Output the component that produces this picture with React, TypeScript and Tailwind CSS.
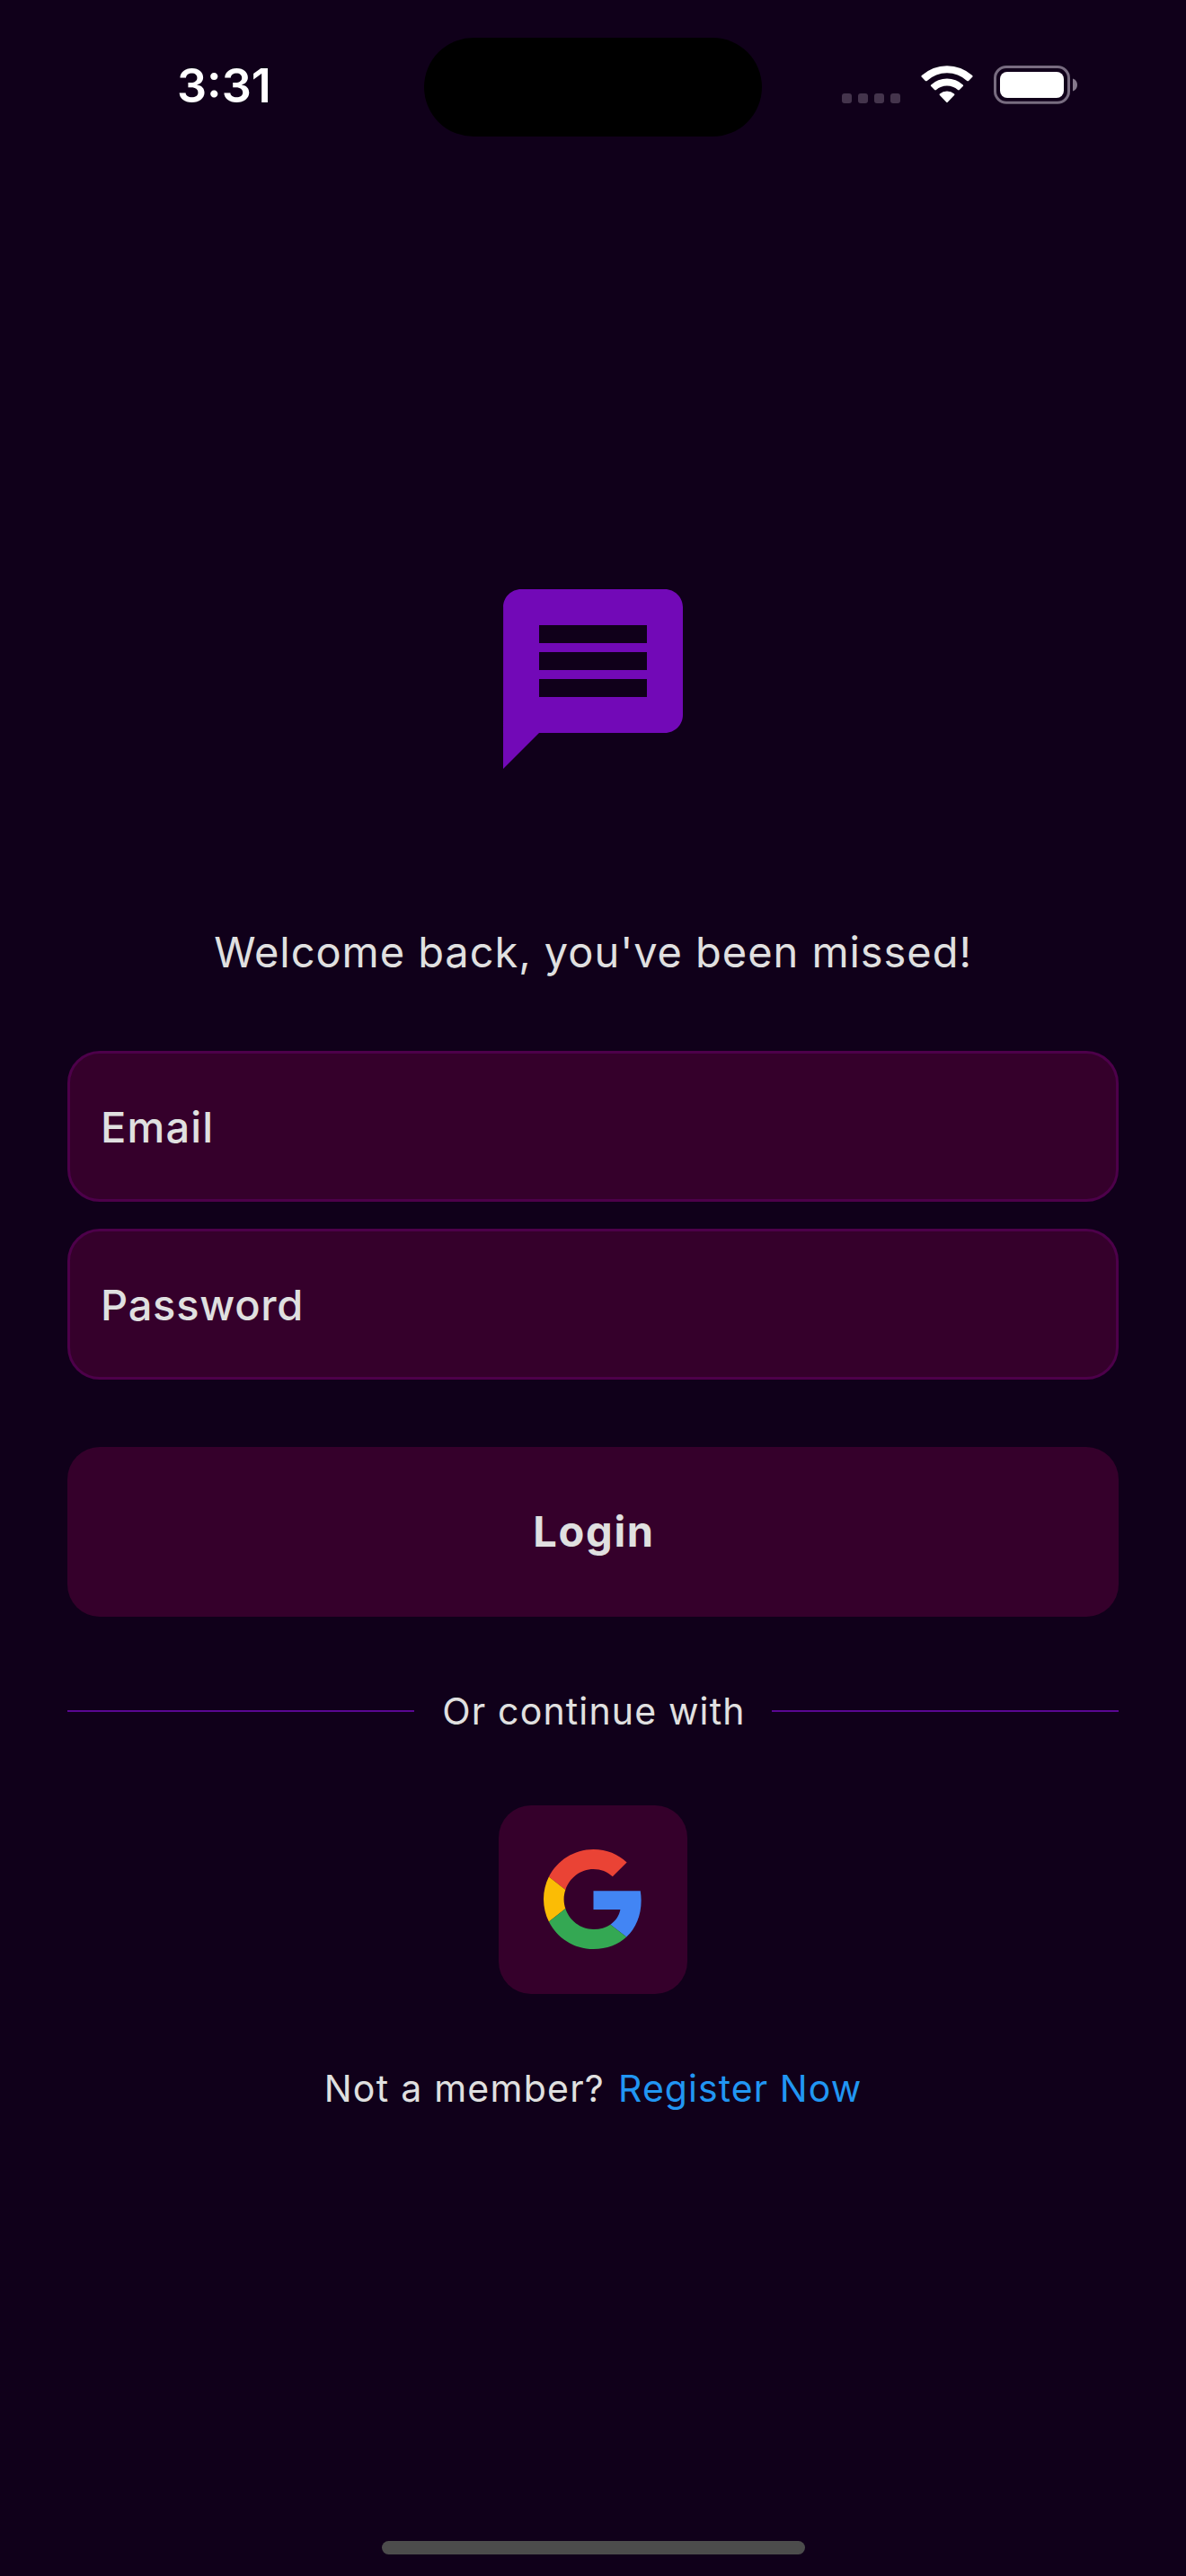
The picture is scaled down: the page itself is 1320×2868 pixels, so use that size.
import React from "react";

function StatusBar() {
  return (
    <header className="flex h-[152px] items-start pt-[42px]">
      <div className="w-[472px] pt-[24px] pl-[197px] text-[52px] leading-[60px] font-semibold text-white">
        3:31
      </div>
      <div className="h-[110px] w-[376px] rounded-[55px] bg-black" />
      <div className="flex pt-[31px] pl-[89px]">
        <div className="mt-[31px] flex gap-[7px]">
          <span className="size-[11px] rounded-[3px] bg-[#44344c]" />
          <span className="size-[11px] rounded-[3px] bg-[#44344c]" />
          <span className="size-[11px] rounded-[3px] bg-[#44344c]" />
          <span className="size-[11px] rounded-[3px] bg-[#44344c]" />
        </div>
        <WifiIcon />
        <BatteryIcon />
      </div>
    </header>
  );
}

function WifiIcon() {
  return (
    <svg className="ml-[22px] h-[43px] w-[60px]" viewBox="0 0 60 43" fill="#fff">
      <path d="M1.8 12.7Q1 12 1.8 11.1A42 42 0 0 1 58.2 11.1Q59 12 58.2 12.8L54.1 16.9Q53.2 17.8 52.2 16.9A32.6 32.6 0 0 0 7.8 16.9Q6.8 17.8 5.9 16.9Z" />
      <path d="M12.2 23.1Q11.3 22.2 12.2 21.4A26.5 26.5 0 0 1 47.8 21.4Q48.7 22.2 47.8 23.1L43.9 27Q43 27.9 42 27.1A17.8 17.8 0 0 0 18 27.1Q17 27.9 16.1 27Z" />
      <path d="M21.9 33Q21.1 32.2 21.9 31.4A12.4 12.4 0 0 1 38.1 31.4Q38.9 32.2 38.1 33L30.7 40.8Q30 41.5 29.3 40.8Z" />
    </svg>
  );
}

function BatteryIcon() {
  return (
    <svg className="ml-[20px] h-[43px] w-[96px]" viewBox="0 0 96 43" fill="none">
      <rect x="3.5" y="1.5" width="82" height="39.8" rx="12.5" stroke="#786c80" strokeWidth="3" />
      <rect x="9" y="7" width="71" height="29" rx="8" fill="#fff" />
      <path d="M90 14.5c3 1 5 3.600 5 7s-2 6-5 7z" fill="#85798c" />
    </svg>
  );
}

function MessageIcon() {
  return (
    <svg className="size-[240px]" viewBox="0 0 24 24" fill="#7209b7">
      <path d="M20 2H4c-1.100 0-1.990.9-1.990 2L2 22l4-4h14c1.100 0 2-.9 2-2V4c0-1.100-.9-2-2-2zm-2 12H6v-2h12v2zm0-3H6V9h12v2zm0-3H6V6h12v2z" />
    </svg>
  );
}

function GoogleIcon() {
  return (
    <svg className="mb-px size-[111px]" viewBox="0 0 48 48">
      <path fill="#EA4335" d="M24 9.500c3.540 0 6.710 1.220 9.210 3.600l6.850-6.850C35.900 2.380 30.470 0 24 0 14.620 0 6.510 5.380 2.560 13.220l7.980 6.190C12.430 13.720 17.740 9.500 24 9.500z" />
      <path fill="#4285F4" d="M46.980 24.550c0-1.570-.15-3.090-.38-4.550H24v9.020h12.940c-.58 2.960-2.260 5.480-4.780 7.180l7.730 6c4.510-4.180 7.090-10.360 7.090-17.650z" />
      <path fill="#FBBC05" d="M10.530 28.590c-.48-1.450-.76-2.990-.76-4.590s.27-3.140.76-4.590l-7.980-6.190C.92 16.460 0 20.120 0 24c0 3.880.92 7.540 2.560 10.780l7.970-6.190z" />
      <path fill="#34A853" d="M24 48c6.480 0 11.930-2.130 15.890-5.810l-7.730-6c-2.150 1.450-4.920 2.300-8.160 2.300-6.260 0-11.570-4.220-13.470-9.910l-7.980 6.190C6.510 42.620 14.620 48 24 48z" />
    </svg>
  );
}

const field =
  "h-[168px] w-full rounded-[36px] border-[3px] border-[#4d004a] bg-[#35002b] px-[34px] text-[47px] font-medium text-[#e0e0e0] outline-none placeholder:text-[#e0e0e0] placeholder:opacity-100";

export default function App() {
  return (
    <div className="flex h-[2868px] w-[1320px] flex-col overflow-hidden bg-[#10001a] font-[Inter,sans-serif] text-[#e0e0e0]">
      <StatusBar />
      <main className="flex flex-1 flex-col items-center px-[75px] pt-[484px]">
        <MessageIcon />
        <p className="mt-[154px] text-[47px] leading-[60px] tracking-[0.94px] whitespace-nowrap">
          Welcome back, you've been missed!
        </p>
        <form className="mt-[80px] flex w-full flex-col gap-[30px]">
          <input type="email" placeholder="Email" className={`${field} tracking-[1.17px]`} />
          <input type="password" placeholder="Password" className={`${field} tracking-[0.74px]`} />
          <button
            type="button"
            className="mt-[45px] h-[189px] w-full rounded-[36px] bg-[#35002b] pl-[2px] text-[47px] font-bold tracking-[1.72px]"
          >
            Login
          </button>
        </form>
        <div className="mt-[80px] flex h-[50px] w-full items-center">
          <div className="h-[2px] flex-1 bg-[#5a0792]" />
          <span className="w-[398px] pl-[2px] text-center text-[41px] leading-[50px] tracking-[1.15px]">
            Or continue with
          </span>
          <div className="h-[2px] flex-1 bg-[#5a0792]" />
        </div>
        <button
          type="button"
          aria-label="Google"
          className="mt-[80px] flex size-[210px] items-center justify-center rounded-[36px] bg-[#35002b]"
        >
          <GoogleIcon />
        </button>
        <p className="mt-[80px] flex gap-[15px] text-[41px] leading-[50px] whitespace-nowrap">
          <span className="tracking-[1.25px]">Not a member?</span>
          <a className="tracking-[1.05px] text-[#2196f3]">Register Now</a>
        </p>
      </main>
      <div className="mb-[24px] h-[15px] w-[471px] self-center rounded-full bg-[#4c4c4c]" />
    </div>
  );
}
